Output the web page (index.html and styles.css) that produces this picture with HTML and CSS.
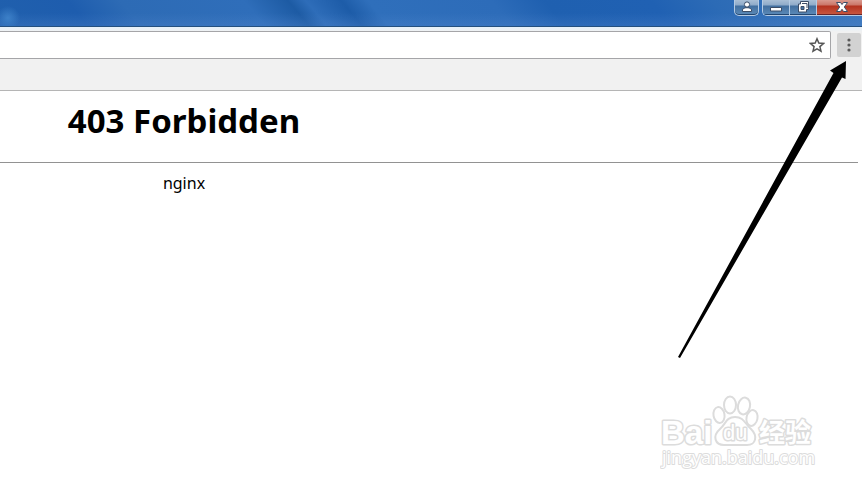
FILE: index.html
```html
<!DOCTYPE html>
<html lang="en">
<head>
  <meta charset="UTF-8" />
  <meta name="viewport" content="width=device-width, initial-scale=1" />
  <title>403 Forbidden</title>

  <link rel="stylesheet" href="styles.css">
</head>
<body>
  <header class="titlebar">
    <button class="win-btn user" aria-label="Profile">
      <svg width="14" height="12" viewBox="0 0 14 12"><circle cx="7" cy="3.500" r="2.600"/><path d="M2.500 10.500V9C2.500 7.500 4.500 6.700 7 6.700s4.500.8 4.500 2.300v1.500z"/></svg>
    </button>
    <div class="win-group">
      <button class="win-btn" aria-label="Minimize">
        <svg width="14" height="12" viewBox="0 0 14 12"><path d="M1.500 6.500h11v3.500h-11z"/></svg>
      </button>
      <button class="win-btn" aria-label="Restore">
        <svg width="14" height="12" viewBox="0 0 14 12"><path fill-rule="evenodd" d="M4.500.5h8v8h-2v2.500h-8v-8h2zM5 5.500v3h3v-3z"/><path class="inner" d="M6 2.500h5v4.500"/></svg>
      </button>
      <button class="win-btn close" aria-label="Close">
        <svg width="14" height="12" viewBox="0 0 14 12"><path d="M1.500 1.500H5.500L7 3.500l1.500-2h4L9.300 6l3.200 4.500h-4L7 8.300l-1.500 2.200h-4L4.700 6z"/></svg>
      </button>
    </div>
  </header>

  <nav class="toolbar">
    <div class="omnibox">
      <input type="text" aria-label="Address">
      <button class="star" aria-label="Bookmark this page">
        <svg width="16" height="16" viewBox="0 0 16 16"><path d="M8 1.800l1.800 4.300 4.700.4-3.600 3.100 1.100 4.600L8 11.800l-4 2.400 1.100-4.600L1.500 6.500l4.700-.4z"/></svg>
      </button>
    </div>
    <button class="menu" aria-label="Menu">
      <svg width="4" height="14" viewBox="0 0 4 14"><circle cx="2" cy="2" r="1.600"/><circle cx="2" cy="7" r="1.600"/><circle cx="2" cy="12" r="1.600"/></svg>
    </button>
  </nav>

  <main>
    <h1>403 Forbidden</h1>
    <hr>
    <p>nginx</p>
  </main>

  <!-- pointer to the menu button -->
  <svg class="arrow" width="170" height="300" viewBox="0 0 170 300" aria-hidden="true">
    <path d="M168 0L167.500 18L164 16.500L2 297L0 296L155.500 12L152 9.500z"/>
  </svg>

  <svg class="watermark" width="160" height="78" viewBox="0 0 160 78">
    <g class="paw">
      <ellipse cx="59" cy="22" rx="5.500" ry="8" transform="rotate(-10 59 22)"/>
      <ellipse cx="70" cy="12" rx="6" ry="8.500"/>
      <ellipse cx="84" cy="13" rx="6" ry="8.500" transform="rotate(12 84 13)"/>
      <ellipse cx="92" cy="25" rx="5.500" ry="8" transform="rotate(12 92 25)"/>
      <path d="M75 24c-9 0-9 7-15 12-8 7-5 16 4 16h23c9 0 11-9 4-16-6-5-7-12-16-12z"/>
    </g>
    <text class="bai" x="1" y="51">Bai</text>
    <text class="du" x="63" y="47">du</text>
    <text class="cn" x="99" y="49">经验</text>
    <text class="url" x="2" y="71">jingyan.baidu.com</text>
  </svg>
</body>
</html>
```
FILE: styles.css
```css
* {
  box-sizing: border-box;
}
body {
  margin: 0;
  min-height: 100vh;
  position: relative;
  background: #fff;
  color: #000;
  font-family: "Noto Sans", "Open Sans", sans-serif;
}
button {
  padding: 0;
  border: 0;
  background: none;
}

/* Window frame */
.titlebar {
  display: flex;
  justify-content: flex-end;
  align-items: flex-start;
  gap: 3px;
  height: 27px;
  border-bottom: 1px solid #24507f;
  background:
    radial-gradient(circle at 8px 18px, #3c80c8, transparent 12px),
    linear-gradient(to top, rgba(90, 140, 210, 0.25), transparent 50%),
    linear-gradient(50deg, #2060ad 0%, #1e5dae 10%, #2d6bb5 16%, #2f6eba 30%, #1d5ba4 35%, #2e6db9 37%, #1d5ca8 41%, #2f6fbb 44%, #2d6cb9 58%, #1f60b0 64%, #2061b3 76%, #2c6bb6 83%, #3d78bd 100%);
}
.win-group {
  display: flex;
  border: 1px solid #b4cbe4;
  border-width: 0 0 1px 1px;
  border-radius: 0 0 0 5px;
  overflow: hidden;
}
.win-btn {
  display: flex;
  align-items: center;
  justify-content: center;
  width: 27px;
  height: 15px;
  padding-bottom: 2px;
  border-right: 1px solid #b4cbe4;
  background: linear-gradient(#a9bfd6 0, #8fabc9 5px, #426f9f 6px, #5c8bb9 100%);
  box-shadow: inset 0 -1px #23466f;
}
.win-btn svg {
  fill: #fff;
  stroke: #3c4e68;
  stroke-width: 1;
}
.win-btn .inner {
  fill: none;
}
.win-btn.user {
  width: 25px;
  height: 16px;
  border: 1px solid #b4cbe4;
  border-top: 0;
  border-radius: 0 0 5px 5px;
}
.win-btn.close {
  width: 45px;
  padding-left: 4px;
  border-right: 0;
  background: linear-gradient(#d99a8f 0, #cb7668 5px, #b3321f 6px, #c95a42 100%);
  box-shadow: inset 0 -1px #6a2528;
}

/* Address row and the empty bookmarks strip */
.toolbar {
  display: flex;
  align-items: flex-start;
  gap: 6px;
  height: 64px;
  padding: 4px 1px 0 0;
  border-bottom: 1px solid #b5b5b5;
  background: linear-gradient(#e6f1fa 0, #f1f1f1 5px);
}
.omnibox {
  display: flex;
  flex: 1;
  align-items: center;
  height: 28px;
  padding-right: 5px;
  border: 1px solid #a5a5a8;
  border-left: 0;
  border-radius: 0 2px 2px 0;
  background: #fff;
}
.omnibox input {
  flex: 1;
  min-width: 0;
  border: 0;
  outline: 0;
  background: none;
}
.star {
  display: flex;
}
.star svg {
  fill: none;
  stroke: #555;
  stroke-width: 1.5;
}
.menu {
  display: flex;
  align-items: center;
  justify-content: center;
  width: 24px;
  height: 24px;
  margin-top: 2px;
  border-radius: 2px;
  background: #d2d2d2;
}
.menu svg {
  fill: #5a5a5a;
}

/* Error page */
main {
  padding-right: 4px;
}
h1,
main p {
  width: 368px;
  margin: 0;
  text-align: center;
}
h1 {
  padding: 6px 0 17px;
  font-size: 33px;
  line-height: 48px;
}
hr {
  margin: 0;
  border: 0;
  border-top: 1px solid #929292;
}
main p {
  padding-top: 8px;
  font-size: 16px;
  line-height: 24px;
}

/* Overlays */
.arrow {
  position: absolute;
  top: 61px;
  right: 14px;
}
.watermark {
  position: absolute;
  right: 42px;
  bottom: 18px;
  fill: #fff;
  stroke: #dcdcdc;
  stroke-width: 1;
}
.watermark .paw {
  stroke-width: 2;
}
.watermark text {
  paint-order: stroke;
  stroke-width: 3;
  stroke-linejoin: round;
}
.watermark .bai {
  font: bold 33px "Liberation Sans", sans-serif;
}
.watermark .du {
  font: 22px "Liberation Sans", sans-serif;
}
.watermark .cn {
  font: bold 26px "Noto Sans CJK SC", sans-serif;
}
.watermark .url {
  font: 18px "Open Sans", sans-serif;
  stroke-width: 2;
}
```
